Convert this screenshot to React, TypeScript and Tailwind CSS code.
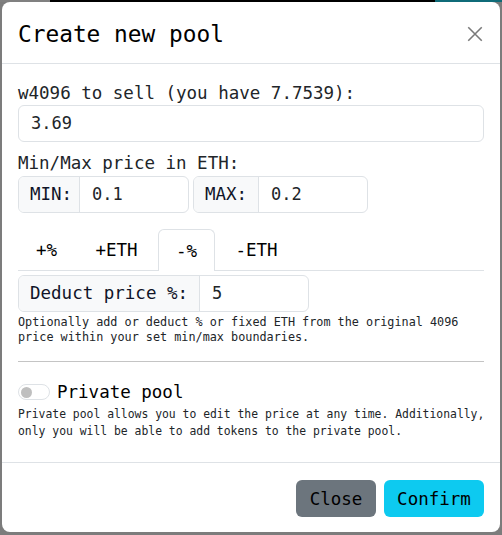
import React from 'react';

const tabs = [
  { label: '+%', width: 'w-[57px]', active: false },
  { label: '+ETH', width: 'w-[83px]', active: false },
  { label: '-%', width: 'w-[57px]', active: true },
  { label: '-ETH', width: 'w-[83px]', active: false },
];

function InputGroup({ addon, value, addonW, inputW }: { addon: string; value: string; addonW: string; inputW: string }) {
  return (
    <div className="flex h-[37px] rounded-md border border-[#dee2e6] overflow-hidden">
      <div className={`${addonW} flex items-center px-[11px] whitespace-nowrap bg-[#f8f9fa] border-r border-[#dee2e6] text-[17.5px] text-[#101428]`}>
        {addon}
      </div>
      <div className={`${inputW} flex items-center px-3 text-[17px] text-[#212529]`}>{value}</div>
    </div>
  );
}

export default function App() {
  return (
    <div className="w-[502px] h-[535px] bg-[#7c7c7c] flex flex-col font-['DejaVu_Sans_Mono',monospace] text-[#212529]">
      <div className="flex h-[2px]">
        <div className="w-[50px] bg-[#808080]" />
        <div className="w-[385px] bg-black" />
        <div className="flex-1 bg-[#0f6b78]" />
      </div>
      <div className="mx-[2px] h-[530px] bg-white rounded-lg flex flex-col">
        {/* header */}
        <div className="h-[62px] flex items-center justify-between pl-4 pr-[16px] pt-[3px] border-b border-[#dee2e6]">
          <span className="text-[22.8px] text-black">Create new pool</span>
          <svg width="18" height="18" viewBox="0 0 16 16" className="text-[#7a7a7a]">
            <path d="M2 2 L14 14 M14 2 L2 14" stroke="currentColor" strokeWidth="1.4" fill="none" />
          </svg>
        </div>

        {/* body */}
        <div className="flex-1 px-4 pt-[17px]">
          <div className="h-[24px] leading-[24px] text-[17.5px]">w4096 to sell (you have 7.7539):</div>
          <div className="h-[37px] rounded-md border border-[#dee2e6] flex items-center px-3 text-[17px]">3.69</div>

          <div className="mt-[8px] h-[26px] leading-[26px] text-[17.5px]">Min/Max price in ETH:</div>
          <div className="flex gap-[4px]">
            <InputGroup addon="MIN:" value="0.1" addonW="w-[61px]" inputW="w-[108px]" />
            <InputGroup addon="MAX:" value="0.2" addonW="w-[65px]" inputW="w-[108px]" />
          </div>

          <div className="mt-[16px] flex h-[42px] border-b border-[#dee2e6]">
            {tabs.map((t) => (
              <div
                key={t.label}
                className={`${t.width} flex items-center justify-center pt-[2px] text-[17.5px] text-black ${
                  t.active ? 'border border-b-0 border-[#dee2e6] rounded-t-md bg-white -mb-px h-[42px]' : ''
                }`}
              >
                {t.label}
              </div>
            ))}
          </div>

          <div className="mt-[4px] flex">
            <InputGroup addon="Deduct price %:" value="5" addonW="w-[181px]" inputW="w-[108px]" />
          </div>

          <p className="mt-[3px] text-[11.8px] leading-[15px] whitespace-nowrap">
            Optionally add or deduct % or fixed ETH from the original 4096
            <br />
            price within your set min/max boundaries.
          </p>

          <div className="mt-[16px] h-px bg-[#c4c4c4]" />

          <div className="mt-[17px] h-[26px] flex items-center gap-[7px]">
            <div className="w-[32px] h-[16px] rounded-full border border-[#dee2e6] flex items-center pl-[2px]">
              <div className="w-[11px] h-[11px] rounded-full bg-[#bfbfbf]" />
            </div>
            <span className="text-[17.5px] text-black">Private pool</span>
          </div>
          <p className="mt-[1px] text-[11.4px] leading-[17px] whitespace-nowrap">
            Private pool allows you to edit the price at any time. Additionally,
            <br />
            only you will be able to add tokens to the private pool.
          </p>
        </div>

        {/* footer */}
        <div className="h-[70px] border-t border-[#dee2e6] flex items-center justify-end gap-2 px-4 pt-[1px]">
          <button className="w-[80px] h-[37px] rounded-md bg-[#6c757d] pt-[2px] text-[17.5px] text-black">Close</button>
          <button className="w-[100px] h-[37px] rounded-md bg-[#0dcaf0] pt-[2px] text-[17.5px] text-black">Confirm</button>
        </div>
      </div>
    </div>
  );
}
